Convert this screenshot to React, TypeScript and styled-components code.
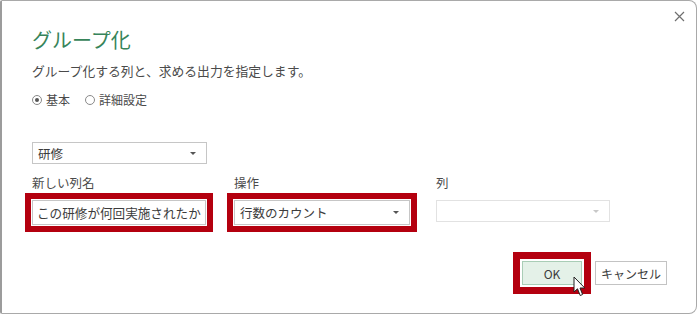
import React from "react";
import styled, { createGlobalStyle } from "styled-components";

const GlobalStyle = createGlobalStyle`
  html, body {
    margin: 0;
    padding: 0;
    background: #ffffff;
  }
  body {
    font-family: "Noto Sans CJK JP", "Noto Sans", "Liberation Sans", sans-serif;
    color: #444444;
  }
`;

const Dialog = styled.div`
  position: relative;
  width: 697px;
  height: 314px;
  box-sizing: border-box;
  border: 1px solid #a9a9a9;
  border-left: 2px solid #9c9c9c;
  border-radius: 2px 8px 8px 2px;
  background: #ffffff;
  padding: 27px 29px 0 30px;
  display: flex;
  flex-direction: column;
`;

const CloseButton = styled.button`
  position: absolute;
  top: 8px;
  right: 10px;
  width: 14px;
  height: 14px;
  padding: 0;
  border: none;
  background: transparent;
  display: flex;
  align-items: center;
  justify-content: center;
`;

const Title = styled.h1`
  margin: 0;
  font-size: 20px;
  line-height: 24px;
  font-weight: 400;
  color: #37845a;
`;

const Subtitle = styled.p`
  margin: 10px 0 0 0;
  font-size: 12.8px;
  line-height: 18px;
  color: #4a4a4a;
`;

const RadioRow = styled.div`
  margin-top: 11px;
  display: flex;
  align-items: center;
  gap: 15px;
  font-size: 12px;
  line-height: 18px;
  color: #4a4a4a;
`;

const RadioLabel = styled.label`
  display: flex;
  align-items: center;
  gap: 4px;
`;

const RadioDot = styled.span<{ $checked?: boolean }>`
  width: 8px;
  height: 8px;
  border-radius: 50%;
  border: 1px solid #8a8a8a;
  box-sizing: content-box;
  display: flex;
  align-items: center;
  justify-content: center;
  &::after {
    content: "";
    width: 4px;
    height: 4px;
    border-radius: 50%;
    background: ${(p) => (p.$checked ? "#555555" : "transparent")};
  }
`;

const Select = styled.div<{ $width: number; $height: number; $disabled?: boolean; $highlight?: boolean }>`
  width: ${(p) => p.$width}px;
  height: ${(p) => p.$height}px;
  box-sizing: border-box;
  border: 1px solid ${(p) => (p.$disabled ? "#e2e2e2" : "#c6c6c6")};
  background: #ffffff;
  display: flex;
  align-items: center;
  justify-content: space-between;
  padding: 0 10px 0 5px;
  font-size: 12.5px;
  color: #3c3c3c;
  outline: ${(p) => (p.$highlight ? "6px solid #b4000f" : "none")};
  outline-offset: 1px;
`;

const Arrow = styled.span<{ $disabled?: boolean }>`
  width: 0;
  height: 0;
  border-left: 3px solid transparent;
  border-right: 3px solid transparent;
  border-top: 3px solid ${(p) => (p.$disabled ? "#c8c8c8" : "#555555")};
`;

const KeySelect = styled.div`
  margin-top: 33px;
`;

const FieldGrid = styled.div`
  margin-top: 10px;
  display: grid;
  grid-template-columns: 175px 175px 175px;
  column-gap: 27px;
  align-items: start;
`;

const Field = styled.div`
  display: flex;
  flex-direction: column;
  gap: 8px;
`;

const FieldLabel = styled.div`
  font-size: 12.5px;
  line-height: 18px;
  color: #4a4a4a;
`;

const TextInput = styled.div<{ $highlight?: boolean }>`
  width: 174px;
  height: 25px;
  box-sizing: border-box;
  border: 1px solid #c6c6c6;
  padding: 0 4px;
  display: flex;
  align-items: center;
  font-size: 12.6px;
  color: #3c3c3c;
  white-space: nowrap;
  overflow: hidden;
  outline: ${(p) => (p.$highlight ? "6px solid #b4000f" : "none")};
  outline-offset: 1px;
`;

const Footer = styled.div`
  margin-top: 36px;
  display: flex;
  justify-content: flex-end;
  gap: 13px;
`;

const Button = styled.button<{ $primary?: boolean; $width: number }>`
  position: relative;
  width: ${(p) => p.$width}px;
  height: 24px;
  box-sizing: border-box;
  border: 1px solid ${(p) => (p.$primary ? "#a9cdb6" : "#c3c3c3")};
  background: ${(p) => (p.$primary ? "#e4f1e8" : "#ffffff")};
  font-family: inherit;
  font-size: 12px;
  color: #3c3c3c;
  padding: 0;
  outline: ${(p) => (p.$primary ? "7px solid #b4000f" : "none")};
  outline-offset: 2px;
`;

const Cursor = styled.svg`
  position: absolute;
  left: 50px;
  top: 14px;
`;

const App: React.FC = () => {
  return (
    <>
      <GlobalStyle />
      <Dialog>
        <CloseButton aria-label="閉じる">
          <svg width="11" height="11" viewBox="0 0 11 11">
            <path d="M1 1 L10 10 M10 1 L1 10" stroke="#6f6f6f" strokeWidth="1.2" fill="none" />
          </svg>
        </CloseButton>

        <Title>グループ化</Title>
        <Subtitle>グループ化する列と、求める出力を指定します。</Subtitle>

        <RadioRow>
          <RadioLabel>
            <RadioDot $checked />
            基本
          </RadioLabel>
          <RadioLabel>
            <RadioDot />
            詳細設定
          </RadioLabel>
        </RadioRow>

        <KeySelect>
          <Select $width={175} $height={22}>
            研修
            <Arrow />
          </Select>
        </KeySelect>

        <FieldGrid>
          <Field>
            <FieldLabel>新しい列名</FieldLabel>
            <TextInput $highlight>この研修が何回実施されたか</TextInput>
          </Field>
          <Field>
            <FieldLabel>操作</FieldLabel>
            <Select $width={176} $height={25} $highlight>
              行数のカウント
              <Arrow />
            </Select>
          </Field>
          <Field>
            <FieldLabel>列</FieldLabel>
            <Select $width={174} $height={22} $disabled>
              <span />
              <Arrow $disabled />
            </Select>
          </Field>
        </FieldGrid>

        <Footer>
          <Button $primary $width={60}>
            OK
            <Cursor width="14" height="22" viewBox="0 0 14 22">
              <path
                d="M1 1 L1 16 L4.5 12.8 L7.2 19.5 L9.6 18.5 L7 12 L11.8 12 Z"
                fill="#ffffff"
                stroke="#222222"
                strokeWidth="1"
                strokeLinejoin="round"
              />
            </Cursor>
          </Button>
          <Button $width={72}>キャンセル</Button>
        </Footer>
      </Dialog>
    </>
  );
};

export default App;
